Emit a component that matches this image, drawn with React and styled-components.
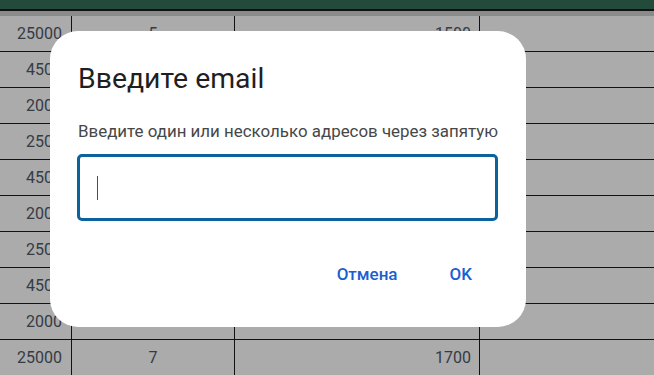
import React from "react";
import styled, { createGlobalStyle } from "styled-components";

const Global = createGlobalStyle`
  html, body { margin: 0; padding: 0; background: #ababab; }
  body { font-family: Roboto, "Noto Sans", sans-serif; overflow: hidden; }
`;

const Page = styled.div`
  position: relative;
  width: 654px;
  height: 375px;
  overflow: hidden;
  background: #ababab;
`;

const HeaderBar = styled.div`
  height: 9px;
  background: #234a3b;
  border-bottom: 2px solid #111;
`;

const Band = styled.div`
  height: 5px;
  background: #8b8b8b;
`;

const Row = styled.div`
  display: grid;
  grid-template-columns: 72px 163px 245px 1fr;
  height: 36px;
  box-sizing: border-box;
  border-bottom: 1px solid #111;
`;

const Cell = styled.div`
  display: flex;
  align-items: center;
  justify-content: ${(p) => (p.$align === "center" ? "center" : "flex-end")};
  padding: 0 ${(p) => p.$pad || 0}px 0 0;
  box-sizing: border-box;
  border-right: ${(p) => (p.$last ? "none" : "1px solid #111")};
  font-size: 16px;
  color: #343b44;
  background: #ababab;
`;

const Dialog = styled.div`
  position: absolute;
  left: 50px;
  top: 31px;
  width: 476px;
  height: 296px;
  box-sizing: border-box;
  background: #fff;
  border-radius: 28px;
  padding: 30px 28px 0 27px;
  display: flex;
  flex-direction: column;
`;

const Title = styled.h2`
  margin: 0 0 0 1px;
  font-family: Roboto, sans-serif;
  font-weight: 400;
  font-size: 28.4px;
  line-height: 36px;
  color: #1f1f1f;
`;

const Subtitle = styled.p`
  margin: 24px 0 0 1px;
  font-size: 16.9px;
  line-height: 20px;
  color: #474747;
  white-space: nowrap;
`;

const InputBox = styled.div`
  margin-top: 13px;
  height: 67px;
  box-sizing: border-box;
  border: 3px solid #0b639e;
  border-radius: 5px;
  display: flex;
  align-items: center;
  padding-left: 17px;
`;

const Caret = styled.span`
  display: block;
  width: 1px;
  height: 24px;
  background: #1d4fbf;
`;

const Actions = styled.div`
  margin-top: 33px;
  display: flex;
  justify-content: flex-end;
  gap: 28px;
  padding-right: 14px;
`;

const TextButton = styled.button`
  border: none;
  background: transparent;
  height: 40px;
  padding: 0 12px;
  font-family: Roboto, sans-serif;
  font-weight: 500;
  font-size: 17px;
  color: #1a5fd1;
  cursor: pointer;
`;

const rows = [
  ["25000", "5", "1500"],
  ["4500", "3", "1200"],
  ["2000", "2", "800"],
  ["2500", "4", "1000"],
  ["4500", "3", "1200"],
  ["2000", "2", "800"],
  ["2500", "4", "1000"],
  ["4500", "3", "1200"],
  ["2000", "2", "800"],
  ["25000", "7", "1700"],
];

export default function App() {
  return (
    <>
      <Global />
      <Page>
        <HeaderBar />
        <Band />
        {rows.map((r, i) => (
          <Row key={i}>
            <Cell $pad={9}>{r[0]}</Cell>
            <Cell $align="center">{r[1]}</Cell>
            <Cell $pad={8}>{r[2]}</Cell>
            <Cell $last />
          </Row>
        ))}
        <Dialog>
          <Title>Введите email</Title>
          <Subtitle>Введите один или несколько адресов через запятую</Subtitle>
          <InputBox>
            <Caret />
          </InputBox>
          <Actions>
            <TextButton>Отмена</TextButton>
            <TextButton>OK</TextButton>
          </Actions>
        </Dialog>
      </Page>
    </>
  );
}
